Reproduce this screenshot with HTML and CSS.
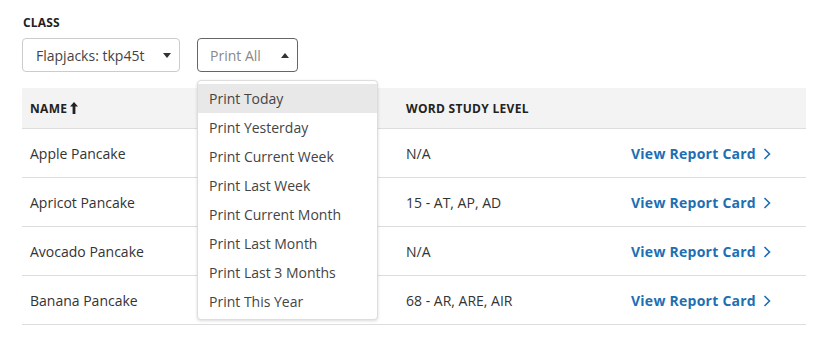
FILE: index.html
```html
<!DOCTYPE html>
<html lang="en">
<head>
  <meta charset="UTF-8">
  <title>Class Report Cards</title>
  <link rel="stylesheet" href="styles.css">
</head>
<body>

  <div class="filters">
    <div class="filter-label">CLASS</div>
    <div class="filter-row">
      <div class="select select-class">
        <span>Flapjacks: tkp45t</span>
        <span class="caret caret-down"></span>
      </div>
      <div class="select-wrap">
        <div class="select select-print">
          <span class="placeholder">Print All</span>
          <span class="caret caret-up"></span>
        </div>
        <ul class="menu">
          <li class="menu-item active">Print Today</li>
          <li class="menu-item">Print Yesterday</li>
          <li class="menu-item">Print Current Week</li>
          <li class="menu-item">Print Last Week</li>
          <li class="menu-item">Print Current Month</li>
          <li class="menu-item">Print Last Month</li>
          <li class="menu-item">Print Last 3 Months</li>
          <li class="menu-item">Print This Year</li>
        </ul>
      </div>
    </div>
  </div>

  <div class="roster">
    <div class="row head">
      <div class="cell">NAME <svg class="sort" viewBox="0 0 8 12" width="8" height="12"><path d="M4 0L0 4.5h2.6V12h2.8V4.5H8z" fill="currentColor"/></svg></div>
      <div class="cell"></div>
      <div class="cell">WORD STUDY LEVEL</div>
      <div class="cell"></div>
    </div>
    <div class="row">
      <div class="cell">Apple Pancake</div>
      <div class="cell"></div>
      <div class="cell">N/A</div>
      <div class="cell"><a class="report-link" href="#">View Report Card <svg class="chev" viewBox="0 0 8 12" width="8" height="12"><path d="M1.5 1l5 5-5 5" fill="none" stroke="currentColor" stroke-width="1.6"/></svg></a></div>
    </div>
    <div class="row">
      <div class="cell">Apricot Pancake</div>
      <div class="cell"></div>
      <div class="cell">15 - AT, AP, AD</div>
      <div class="cell"><a class="report-link" href="#">View Report Card <svg class="chev" viewBox="0 0 8 12" width="8" height="12"><path d="M1.5 1l5 5-5 5" fill="none" stroke="currentColor" stroke-width="1.6"/></svg></a></div>
    </div>
    <div class="row">
      <div class="cell">Avocado Pancake</div>
      <div class="cell"></div>
      <div class="cell">N/A</div>
      <div class="cell"><a class="report-link" href="#">View Report Card <svg class="chev" viewBox="0 0 8 12" width="8" height="12"><path d="M1.5 1l5 5-5 5" fill="none" stroke="currentColor" stroke-width="1.6"/></svg></a></div>
    </div>
    <div class="row">
      <div class="cell">Banana Pancake</div>
      <div class="cell"></div>
      <div class="cell">68 - AR, ARE, AIR</div>
      <div class="cell"><a class="report-link" href="#">View Report Card <svg class="chev" viewBox="0 0 8 12" width="8" height="12"><path d="M1.5 1l5 5-5 5" fill="none" stroke="currentColor" stroke-width="1.6"/></svg></a></div>
    </div>
  </div>

</body>
</html>
```

FILE: styles.css
```css
* {
  margin: 0;
  padding: 0;
  box-sizing: border-box;
}

body {
  font-family: "Open Sans", Arial, sans-serif;
  color: #333;
  background: #fff;
  padding: 15px 16px 0 22px;
  font-size: 14px;
}


.filter-label {
  font-size: 12px;
  font-weight: 700;
  line-height: 16px;
  letter-spacing: 0.2px;
  color: #222;
  margin-left: 1px;
}

.filter-row {
  display: flex;
  gap: 17px;
  margin-top: 7px;
}

.select {
  height: 34px;
  display: flex;
  align-items: center;
  justify-content: space-between;
  border: 1px solid #ccc;
  border-radius: 4px;
  background: #fff;
  padding: 0 8px 0 13px;
  font-size: 14px;
  color: #444;
}

.select-class {
  width: 158px;
}

.select-print {
  width: 101px;
  border-color: #666;
  padding-left: 12px;
}

.placeholder {
  color: #888;
}

.caret {
  width: 0;
  height: 0;
  border-left: 4.5px solid transparent;
  border-right: 4.5px solid transparent;
}

.caret-down {
  border-top: 5px solid #333;
}

.caret-up {
  border-bottom: 5px solid #333;
}


.select-wrap {
  position: relative;
}

.menu {
  position: absolute;
  top: 42px;
  left: 0;
  width: 181px;
  list-style: none;
  background: #fff;
  border: 1px solid #ddd;
  border-radius: 4px;
  box-shadow: 0 1px 3px rgba(0, 0, 0, 0.15);
  padding: 3px 0;
  z-index: 5;
}

.menu-item {
  height: 29px;
  line-height: 29px;
  padding-left: 11px;
  font-size: 14px;
  color: #444;
}

.menu-item.active {
  background: #e8e8e8;
}


.roster {
  margin-top: 16px;
  width: 784px;
}

.row {
  display: grid;
  grid-template-columns: 192px 184px 225px 183px;
  height: 49px;
  align-items: center;
  border-bottom: 1px solid #ddd;
}

.row.head {
  height: 41px;
  background: #f3f3f3;
  font-size: 12px;
  font-weight: 700;
  letter-spacing: 0.3px;
  color: #222;
}

.cell {
  padding-left: 8px;
}

.sort {
  vertical-align: -1px;
  margin-left: -1px;
}

.report-link {
  display: inline-flex;
  align-items: center;
  gap: 7px;
  color: #1d6fb3;
  font-weight: 700;
  letter-spacing: 0.25px;
  text-decoration: none;
}

.chev {
  margin-top: 1px;
}
```
